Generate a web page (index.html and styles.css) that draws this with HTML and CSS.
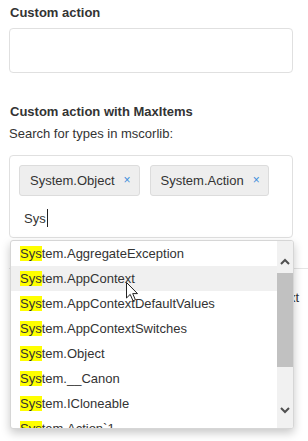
FILE: index.html
```html
<!DOCTYPE html>
<html lang="en">
<head>
    <meta charset="UTF-8">
    <title>Custom actions</title>
    <link rel="stylesheet" href="styles.css">
</head>
<body>
    <div class="page">
        <!-- Plain custom action -->
        <div class="field-label">Custom action</div>
        <div class="text-box"></div>

        <!-- Custom action with MaxItems -->
        <div class="field-label second">Custom action with MaxItems</div>
        <div class="hint">Search for types in mscorlib:</div>

        <div class="picker">
            <div class="tag-box">
                <div class="tags">
                    <span class="tag">System.Object<span class="tag-remove">×</span></span>
                    <span class="tag">System.Action<span class="tag-remove">×</span></span>
                </div>
                <div class="query">Sys<span class="caret"></span></div>
            </div>

            <!-- Suggestions -->
            <div class="dropdown">
                <ul class="suggestions">
                    <li><mark>Sys</mark>tem.AggregateException</li>
                    <li class="hover"><mark>Sys</mark>tem.AppContext</li>
                    <li><mark>Sys</mark>tem.AppContextDefaultValues</li>
                    <li><mark>Sys</mark>tem.AppContextSwitches</li>
                    <li><mark>Sys</mark>tem.Object</li>
                    <li><mark>Sys</mark>tem.__Canon</li>
                    <li><mark>Sys</mark>tem.ICloneable</li>
                    <li><mark>Sys</mark>tem.Action`1</li>
                </ul>
                <div class="scrollbar">
                    <div class="sb-btn sb-up">
                        <svg width="10" height="7" viewBox="0 0 10 7"><polyline points="1,6 5,2 9,6" fill="none" stroke="#505050" stroke-width="2"/></svg>
                    </div>
                    <div class="sb-thumb"></div>
                    <div class="sb-btn sb-down">
                        <svg width="10" height="7" viewBox="0 0 10 7"><polyline points="1,1 5,5 9,1" fill="none" stroke="#505050" stroke-width="2"/></svg>
                    </div>
                </div>
            </div>

            <svg class="pointer" width="13" height="20" viewBox="0 0 13 20">
                <path d="M0.5,0.5 L0.5,16 L4.2,12.4 L7,18.8 L9.4,17.8 L6.7,11.6 L11.5,11.6 Z" fill="#fff" stroke="#222" stroke-width="1"/>
            </svg>
        </div>

        <!-- Next section, mostly covered by the dropdown -->
        <div class="next-section">
            <p class="next-text">Custom action with a custom placeholder text</p>
        </div>
    </div>
</body>
</html>
```

FILE: styles.css
```css
* {
    margin: 0;
    padding: 0;
    box-sizing: border-box;
}

body {
    width: 308px;
    height: 441px;
    overflow: hidden;
    font-family: 'Liberation Sans', Arial, sans-serif;
    font-size: 13px;
    line-height: 15px;
    color: #333;
    background: #fff;
}

.page {
    padding: 5px 15px 0 9px;
}

/* Labels */
.field-label {
    font-weight: bold;
    padding-left: 1px;
    margin-bottom: 8px;
}

.field-label.second {
    margin-top: 31px;
    margin-bottom: 7px;
}

.hint {
    margin-bottom: 14px;
}

.text-box {
    height: 45px;
    border: 1px solid #e0e0e0;
    border-radius: 4px;
}

/* Tag picker */
.picker {
    position: relative;
}

.tag-box {
    border: 1px solid #e0e0e0;
    border-radius: 4px;
    padding: 9px 9px 7px;
}

.tags {
    display: flex;
    gap: 10px;
}

.tag {
    display: inline-flex;
    align-items: center;
    background: #eee;
    border: 1px solid #dcdcdc;
    border-radius: 3px;
    padding: 7px 8px 7px 10px;
    line-height: 15px;
}

.tag-remove {
    color: #3f8fdc;
    font-size: 12px;
    margin-left: 9px;
}

.query {
    display: flex;
    align-items: center;
    height: 24px;
    margin-top: 10px;
    padding-left: 5px;
}

.caret {
    display: inline-block;
    width: 1px;
    height: 18px;
    margin-left: 1px;
    background: #222;
}

/* Dropdown */
.dropdown {
    position: absolute;
    top: 2px;
    left: 1px;
    width: 284px;
    height: 189px;
    display: flex;
    background: #fff;
    border: 1px solid #d6d6d6;
    border-radius: 3px;
    box-shadow: 0 4px 10px rgba(0, 0, 0, 0.22);
    overflow: hidden;
    z-index: 10;
    /* place under the tag box */
    margin-top: 0;
    transform: translateY(83px);
}

.suggestions {
    flex: 1;
    list-style: none;
    overflow: hidden;
}

.suggestions li {
    height: 25px;
    line-height: 25px;
    padding-left: 9px;
    white-space: nowrap;
}

.suggestions li.hover {
    background: #f0f0f0;
}

mark {
    background: #ffff00;
    color: #333;
}

.scrollbar {
    width: 16px;
    display: flex;
    flex-direction: column;
    background: #f1f1f1;
}

.sb-btn {
    display: flex;
    justify-content: center;
}

.sb-up {
    height: 32px;
    padding-top: 17px;
}

.sb-thumb {
    height: 94px;
    background: #c1c1c1;
}

.sb-down {
    margin-top: auto;
    height: 30px;
    padding-top: 9px;
}

.pointer {
    position: absolute;
    left: 117px;
    top: 127px;
    z-index: 20;
}

/* Section behind the dropdown */
.next-section {
    margin-top: 30px;
    margin-right: -15px;
    border-top: 1px solid #e5e5e5;
}

.next-text {
    margin-top: 21px;
    margin-right: 9px;
    text-align: right;
    white-space: nowrap;
}
```
